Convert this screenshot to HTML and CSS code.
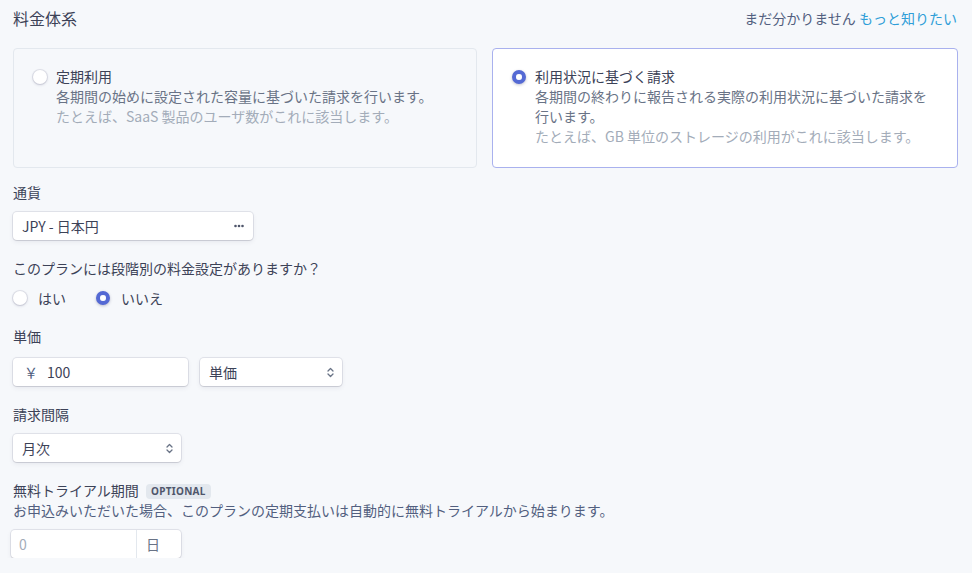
FILE: index.html
```html
<!DOCTYPE html>
<html lang="ja">

<head>
    <meta charset="UTF-8">
    <title>料金体系</title>
    <link rel="stylesheet" href="styles.css">
</head>

<body>

    <main class="form">
        <header class="form-header">
            <h2>料金体系</h2>
            <div class="help">まだ分かりません <a href="#">もっと知りたい</a></div>
        </header>

        <div class="plan-types">
            <label class="plan-card">
                <span class="radio"></span>
                <span class="plan-text">
                    <span class="plan-title">定期利用</span>
                    <span class="plan-desc">各期間の始めに設定された容量に基づいた請求を行います。</span>
                    <span class="plan-example">たとえば、SaaS 製品のユーザ数がこれに該当します。</span>
                </span>
            </label>
            <label class="plan-card selected">
                <span class="radio checked"></span>
                <span class="plan-text">
                    <span class="plan-title">利用状況に基づく請求</span>
                    <span class="plan-desc">各期間の終わりに報告される実際の利用状況に基づいた請求を行います。</span>
                    <span class="plan-example">たとえば、GB 単位のストレージの利用がこれに該当します。</span>
                </span>
            </label>
        </div>

        <div class="field">
            <div class="field-label">通貨</div>
            <div class="control currency">
                <span>JPY - 日本円</span>
                <svg class="dots" width="10" height="4" viewBox="0 0 10 4">
                    <circle cx="1.5" cy="2" r="1.3" fill="#4f566b"/>
                    <circle cx="5" cy="2" r="1.3" fill="#4f566b"/>
                    <circle cx="8.5" cy="2" r="1.3" fill="#4f566b"/>
                </svg>
            </div>
        </div>

        <div class="field">
            <div class="field-label">このプランには段階別の料金設定がありますか？</div>
            <div class="radio-row">
                <label class="option"><span class="radio"></span>はい</label>
                <label class="option"><span class="radio checked"></span>いいえ</label>
            </div>
        </div>

        <div class="field price-field">
            <div class="field-label">単価</div>
            <div class="row">
                <div class="control price">
                    <span class="yen">￥</span>
                    <span>100</span>
                </div>
                <div class="control select unit">
                    <span>単価</span>
                    <svg class="chevrons" width="7" height="11" viewBox="0 0 7 11">
                        <path d="M1 4 L3.5 1.5 L6 4 M1 7 L3.5 9.5 L6 7" fill="none" stroke="#697386" stroke-width="1.3" stroke-linecap="round" stroke-linejoin="round"/>
                    </svg>
                </div>
            </div>
        </div>

        <div class="field">
            <div class="field-label">請求間隔</div>
            <div class="control select interval">
                <span>月次</span>
                <svg class="chevrons" width="7" height="11" viewBox="0 0 7 11">
                    <path d="M1 4 L3.5 1.5 L6 4 M1 7 L3.5 9.5 L6 7" fill="none" stroke="#697386" stroke-width="1.3" stroke-linecap="round" stroke-linejoin="round"/>
                </svg>
            </div>
        </div>

        <div class="field trial">
            <div class="field-label">無料トライアル期間 <span class="badge">OPTIONAL</span></div>
            <div class="field-note">お申込みいただいた場合、このプランの定期支払いは自動的に無料トライアルから始まります。</div>
            <div class="control days">
                <span class="days-value">0</span>
                <span class="days-unit">日</span>
            </div>
        </div>
    </main>

</body>

</html>
```

FILE: styles.css
```css
body {
    margin: 0;
    background-color: #f6f8fb;
    font-family: "Noto Sans CJK JP", "Noto Sans", sans-serif;
    font-size: 14px;
    line-height: 20px;
    color: #3c4257;
}

.form {
    width: 944px;
    padding: 8px 15px 0 13px;
}

.form-header {
    display: flex;
    justify-content: space-between;
    align-items: center;
}

.form-header h2 {
    margin: 0;
    font-size: 16px;
    font-weight: normal;
    line-height: 20px;
    color: #3c4257;
}

.help {
    color: #525f7f;
}

.help a {
    color: #2f9ed8;
    text-decoration: none;
}

.plan-types {
    display: grid;
    grid-template-columns: 464px 466px;
    grid-gap: 15px;
    margin-top: 20px;
}

.plan-card {
    display: flex;
    align-items: flex-start;
    padding: 17px 20px 21px 19px;
    border: 1px solid #e3e8ee;
    border-radius: 4px;
}

.plan-card.selected {
    background-color: #fff;
    border-color: #a9b1ee;
}

.plan-card .radio {
    margin-top: 4px;
    margin-right: 9px;
}

.plan-text {
    display: flex;
    flex-direction: column;
}

.plan-desc {
    color: #697386;
}

.plan-example {
    color: #a3acb9;
}

.radio {
    display: inline-block;
    flex-shrink: 0;
    width: 14px;
    height: 14px;
    border-radius: 50%;
    background-color: #fff;
    box-shadow: 0 0 0 1px rgba(50, 50, 93, .1), 0 1px 3px rgba(50, 50, 93, .2);
    box-sizing: border-box;
}

.radio.checked {
    background-color: #5469d4;
    border: 4px solid #5469d4;
    background-clip: content-box;
    box-shadow: 0 1px 3px rgba(50, 50, 93, .3);
    position: relative;
}

.radio.checked::after {
    content: "";
    position: absolute;
    left: 0;
    top: 0;
    width: 6px;
    height: 6px;
    border-radius: 50%;
    background: #fff;
}

.field {
    margin-top: 18px;
}

.plan-types + .field {
    margin-top: 14px;
}

.field-label {
    margin-bottom: 10px;
}

.price-field .field-label {
    margin-bottom: 12px;
}

.trial .field-label {
    margin-bottom: 0;
}

.field-note {
    color: #525f7f;
    margin-bottom: 10px;
}

.badge {
    display: inline-block;
    margin-left: 4px;
    padding: 0 5px;
    font-family: "Noto Sans", sans-serif;
    font-size: 10px;
    font-weight: bold;
    line-height: 15px;
    letter-spacing: .3px;
    color: #4f566b;
    background-color: #e3e8ee;
    border-radius: 4px;
    vertical-align: 1px;
}

.control {
    display: flex;
    align-items: center;
    height: 28px;
    padding: 0 9px;
    box-sizing: border-box;
    background-color: #fff;
    border-radius: 4px;
    box-shadow: 0 0 0 1px rgba(50, 50, 93, .1), 0 2px 5px 0 rgba(50, 50, 93, .08), 0 1px 1px 0 rgba(0, 0, 0, .07);
    color: #3c4257;
}

.currency {
    width: 240px;
    justify-content: space-between;
}

.radio-row {
    display: flex;
    align-items: center;
    gap: 30px;
}

.option {
    display: flex;
    align-items: center;
}

.option .radio {
    margin-right: 11px;
}

.row {
    display: flex;
    gap: 12px;
}

.price {
    width: 175px;
    padding-left: 11px;
}

.yen {
    width: 23px;
    color: #525f7f;
}

.select {
    justify-content: space-between;
    padding-right: 8px;
}

.unit {
    width: 142px;
}

.interval {
    width: 168px;
}

.days {
    width: 170px;
    padding: 0;
    margin-left: -2px;
}

.days-value {
    flex: 1;
    padding-left: 8px;
    color: #a3acb9;
}

.days-unit {
    width: 45px;
    height: 100%;
    display: flex;
    align-items: center;
    padding-left: 9px;
    box-sizing: border-box;
    border-left: 1px solid #e3e8ee;
    color: #697386;
}
```
